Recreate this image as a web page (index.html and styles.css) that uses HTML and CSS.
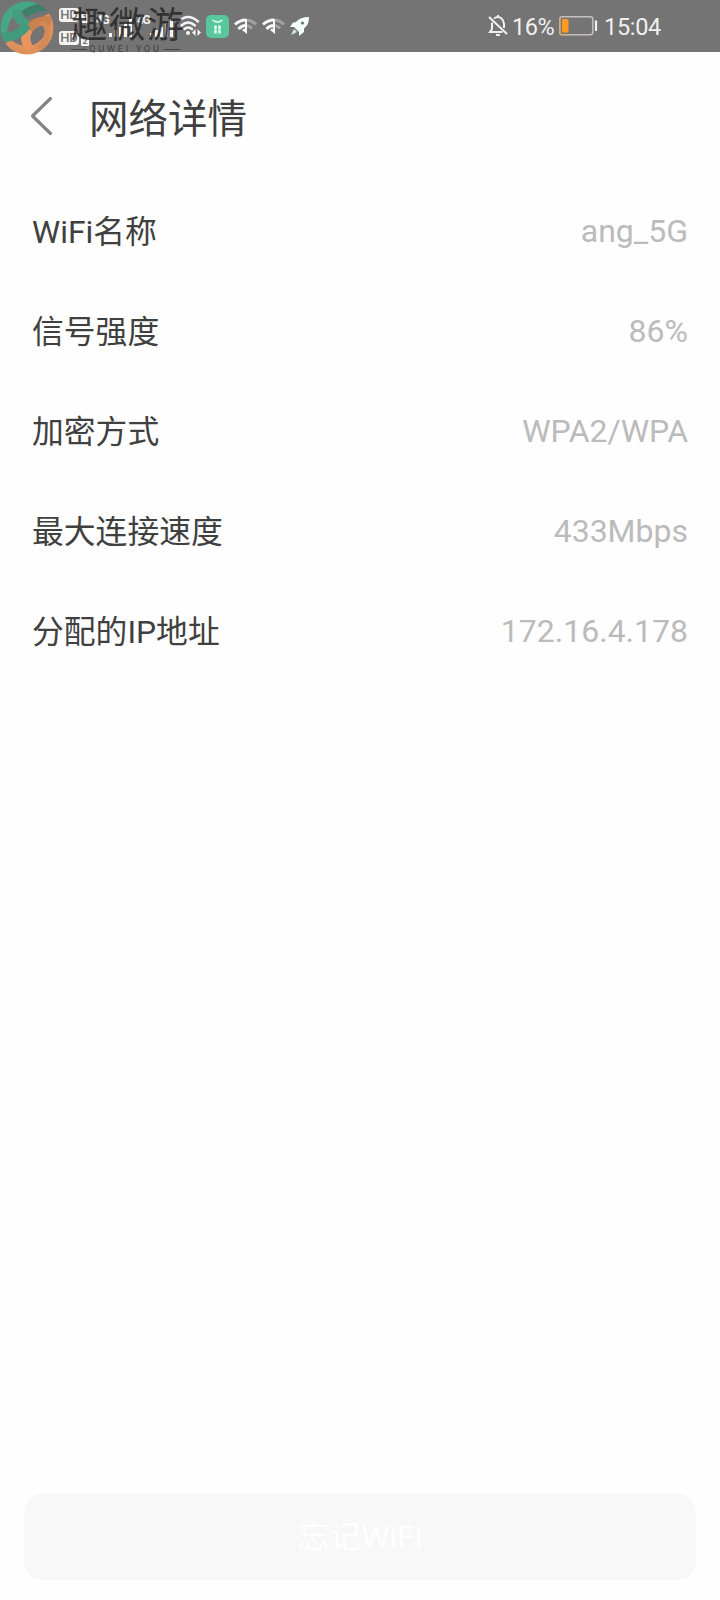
FILE: index.html
```html
<!DOCTYPE html>
<html lang="zh-CN">
<head>
    <meta charset="UTF-8">
    <meta name="viewport" content="width=device-width, initial-scale=1.0">
    <title>网络详情</title>
    <link rel="stylesheet" href="styles.css">
</head>
<body>
    <div class="status-bar">
        <div class="status-left">
            <div class="sim-list">
                <div class="sim"><span class="hd">HD</span><span class="sim-no">1</span></div>
                <div class="sim"><span class="hd">HD</span><span class="sim-no">2</span></div>
            </div>
            <div class="signal">
                <span class="net">4G</span>
                <svg width="23" height="18" viewBox="0 0 23 18"><path d="M0 14h3v4H0zM5 11h3v7H5zM10 8h3v10h-3zM15 4h3v14h-3zM20 0h3v18h-3z" fill="#f4f4f4"/></svg>
            </div>
            <div class="signal">
                <span class="net">4G</span>
                <svg width="23" height="18" viewBox="0 0 23 18"><path d="M0 14h3v4H0zM5 11h3v7H5zM10 8h3v10h-3zM15 4h3v14h-3zM20 0h3v18h-3z" fill="#f4f4f4"/></svg>
            </div>
            <svg class="wifi" width="25" height="22" viewBox="0 0 25 22">
                <g fill="none" stroke="#f4f4f4" stroke-width="2.4" stroke-linecap="round">
                    <path d="M1.5 6.5Q11 -2.5 21 6.5"/>
                    <path d="M4.5 10.5Q11 4.5 18 10.5"/>
                    <path d="M7.5 14Q11 11 15 14"/>
                </g>
                <circle cx="11" cy="18" r="2" fill="#f4f4f4"/>
                <path d="M18.5 14v7L15 17.5zM20.500 14v7l3.500-3.500z" fill="#f4f4f4"/>
            </svg>
            <svg class="app" width="23" height="23" viewBox="0 0 23 23">
                <rect width="23" height="23" rx="5" fill="#58c79c"/>
                <path d="M6.5 5q5 4 10 0" fill="none" stroke="#e9fff5" stroke-width="1.6"/>
                <path d="M9.5 10.500v8M13.500 10.500v8" stroke="#e9fff5" stroke-width="2.400" stroke-dasharray="4 .6"/>
            </svg>
            <svg class="half-wifi" width="23" height="17" viewBox="0 0 23 17">
                <g fill="none" stroke-width="3">
                    <path d="M1 6.5Q6 2 12 2M4.500 11Q7.500 7.500 12 7.500" stroke="#f8f8f8"/>
                    <path d="M13 2Q18 2.500 22 6.500M13 7.500Q16 8 18 10.500" stroke="#a2a2a2"/>
                </g>
                <path d="M13 1v15l-5-4q2-2 3-1V1z" fill="#f8f8f8"/>
            </svg>
            <svg class="half-wifi" width="23" height="17" viewBox="0 0 23 17">
                <g fill="none" stroke-width="3">
                    <path d="M1 6.5Q6 2 12 2M4.500 11Q7.500 7.500 12 7.500" stroke="#f8f8f8"/>
                    <path d="M13 2Q18 2.500 22 6.500M13 7.500Q16 8 18 10.500" stroke="#a2a2a2"/>
                </g>
                <path d="M13 1v15l-5-4q2-2 3-1V1z" fill="#f8f8f8"/>
            </svg>
            <svg width="20" height="20" viewBox="0 0 20 20">
                <path d="M19 1Q10 1 6 6L3 6.500 0 11l4 0 5 5v4l5-4v-3.500Q19 9 19 1z" fill="#f7fffc"/>
                <circle cx="12.500" cy="7" r="1.600" fill="#68786f"/>
                <path d="M4 13l-3 6 6-3z" fill="#ccefe2"/>
            </svg>
        </div>
        <div class="status-right">
            <svg class="bell" width="20" height="22" viewBox="0 0 20 22">
                <g fill="none" stroke="#f0f0f0" stroke-width="2">
                    <path d="M1 2l18 17"/>
                    <path d="M4 7.500V14l-2 3h12.500"/>
                    <path d="M6 3.500Q10 .5 13.500 3.500 16 5.500 16 9v4"/>
                    <path d="M10 0v2M8 20h4"/>
                </g>
            </svg>
            <span class="percent">16%</span>
            <svg class="battery" width="39" height="20" viewBox="0 0 39 20">
                <rect x=".8" y=".8" width="33" height="18" rx="2.500" fill="none" stroke="#c3c0bb" stroke-width="1.500"/>
                <path d="M3 1h-.5Q1 1 1 3v14q0 2 1.500 2H9" fill="none" stroke="#d9a45c" stroke-width="1.200"/>
                <rect x="3" y="3" width="6.500" height="13.500" rx="1" fill="#ff9a22"/>
                <path d="M37 4.500v10.500" stroke="#f0f0f0" stroke-width="2.200"/>
            </svg>
            <span class="time">15:04</span>
        </div>

        <!-- watermark -->
        <div class="watermark">
            <svg width="54" height="54" viewBox="0 0 54 54">
                <defs>
                    <clipPath id="disc"><circle cx="27" cy="27" r="26.500"/></clipPath>
                </defs>
                <g clip-path="url(#disc)" fill="none">
                    <path d="M48 13Q54 27 46 40 36 52 22 49 12 47 7 41" stroke="#df8f5b" stroke-width="9"/>
                    <path d="M29 28Q36 18 51 20" stroke="#c9824f" stroke-width="9"/>
                    <path d="M29 28Q22 37 30 49" stroke="#e8965e" stroke-width="9"/>
                    <path d="M38 47Q47 44 47 30 47 24 41 21" stroke="#d58957" stroke-width="5"/>
                    <path d="M2 36Q2 16 14 9 26 0 45 6" stroke="#46a787" stroke-width="10"/>
                    <path d="M47 6Q34 6 24 13" stroke="#3f7f6b" stroke-width="8"/>
                    <path d="M17 8Q16 19 28 24" stroke="#439d7f" stroke-width="9"/>
                    <path d="M0 36Q17 38 27 24" stroke="#3f9b7b" stroke-width="9"/>
                </g>
            </svg>
            <div class="watermark-text">
                <div class="watermark-name">趣微游</div>
                <div class="watermark-sub">QUWEI YOU</div>
            </div>
        </div>
    </div>

    <div class="header">
        <svg class="back" width="24" height="40" viewBox="0 0 24 40">
            <path d="M20.500 2.500L2.500 20l18 17.500" fill="none" stroke="#858585" stroke-width="3.200" stroke-linecap="round" stroke-linejoin="round"/>
        </svg>
        <h1>网络详情</h1>
    </div>

    <ul class="details">
        <li><span class="label">WiFi名称</span><span class="value">ang_5G</span></li>
        <li><span class="label">信号强度</span><span class="value">86%</span></li>
        <li><span class="label">加密方式</span><span class="value">WPA2/WPA</span></li>
        <li><span class="label">最大连接速度</span><span class="value">433Mbps</span></li>
        <li><span class="label">分配的IP地址</span><span class="value">172.16.4.178</span></li>
    </ul>

    <button class="forget">忘记WiFi</button>
</body>
</html>
```

FILE: styles.css
```css
* {
    box-sizing: border-box;
}

body {
    margin: 0;
    height: 1600px;
    display: flex;
    flex-direction: column;
    background-color: #fefefe;
    color: #404040;
    font-family: Roboto, "Noto Sans CJK SC", sans-serif;
}

svg {
    display: block;
    flex: none;
}

.status-bar {
    position: relative;
    display: flex;
    justify-content: space-between;
    height: 52px;
    padding: 0 59px;
    background-color: #747474;
    color: #f0f0f0;
}

.status-left,
.status-right {
    display: flex;
    align-items: center;
}

.sim-list {
    display: flex;
    flex-direction: column;
    gap: 8px;
    width: 37px;
    padding-top: 2px;
}

.sim {
    display: flex;
    align-items: flex-end;
    gap: 2px;
    height: 15px;
}

.hd {
    width: 20px;
    height: 14px;
    margin-bottom: 1px;
    border-radius: 3px;
    background-color: #f4f4f4;
    color: #747474;
    font-size: 13px;
    font-weight: 500;
    line-height: 14px;
    text-align: center;
}

.sim-no {
    width: 8px;
    height: 9px;
    border-radius: 1px;
    background-color: #f4f4f4;
    color: #747474;
    font-size: 9px;
    font-weight: bold;
    line-height: 9px;
    text-align: center;
}

.signal {
    display: flex;
    width: 41px;
    padding-top: 4px;
}

.net {
    width: 13px;
    margin-top: -5px;
    font-size: 12px;
    font-weight: bold;
    line-height: 13px;
    letter-spacing: -1.5px;
}

.wifi {
    margin: 0 4px 0 -1px;
}

.app,
.half-wifi {
    margin-right: 5px;
}

.status-right {
    width: 173px;
    font-size: 23.5px;
    line-height: 52px;
}

.percent,
.time {
    padding-top: 2px;
    white-space: nowrap;
}

.percent {
    width: 45px;
    letter-spacing: -0.5px;
}

.time {
    letter-spacing: -0.3px;
}

.bell {
    margin-right: 4px;
}

.battery {
    margin: 0 6px 0 3px;
}

.watermark {
    position: absolute;
    top: 1px;
    left: 0;
    display: flex;
    gap: 17px;
}

.watermark-text {
    color: rgba(38, 38, 38, 0.85);
    text-align: center;
}

.watermark-name {
    height: 42px;
    font-size: 36.5px;
    letter-spacing: 1.5px;
    line-height: 49px;
}

.watermark-sub {
    display: flex;
    align-items: center;
    gap: 2px;
    width: 109px;
    padding-top: 1px;
    font-size: 9px;
    line-height: 10px;
    letter-spacing: 2.8px;
    white-space: nowrap;
    opacity: 0.8;
}

.watermark-sub::before,
.watermark-sub::after {
    content: "";
    flex: 1;
    height: 1px;
    background-color: #3c3c3c;
}

.header {
    display: flex;
    align-items: center;
    height: 129px;
    padding: 0 30px;
}

.back {
    margin-top: -2px;
}

h1 {
    margin: 7px 0 0 35px;
    font-size: 39.5px;
    font-weight: 400;
    line-height: 56px;
}

.details {
    margin: 0;
    padding: 0 32px;
    list-style: none;
    font-size: 32px;
}

.details li {
    display: flex;
    align-items: center;
    justify-content: space-between;
    height: 100px;
}

.label {
    padding-bottom: 5px;
    font-size: 31.8px;
}

.value {
    color: #bbb;
}

.forget {
    height: 87px;
    margin: auto 24px 20px;
    padding: 0 0 5px;
    border: none;
    border-radius: 20px;
    background-color: #f8f8f8;
    color: #fefefe;
    font-family: inherit;
    font-size: 32px;
}
```
